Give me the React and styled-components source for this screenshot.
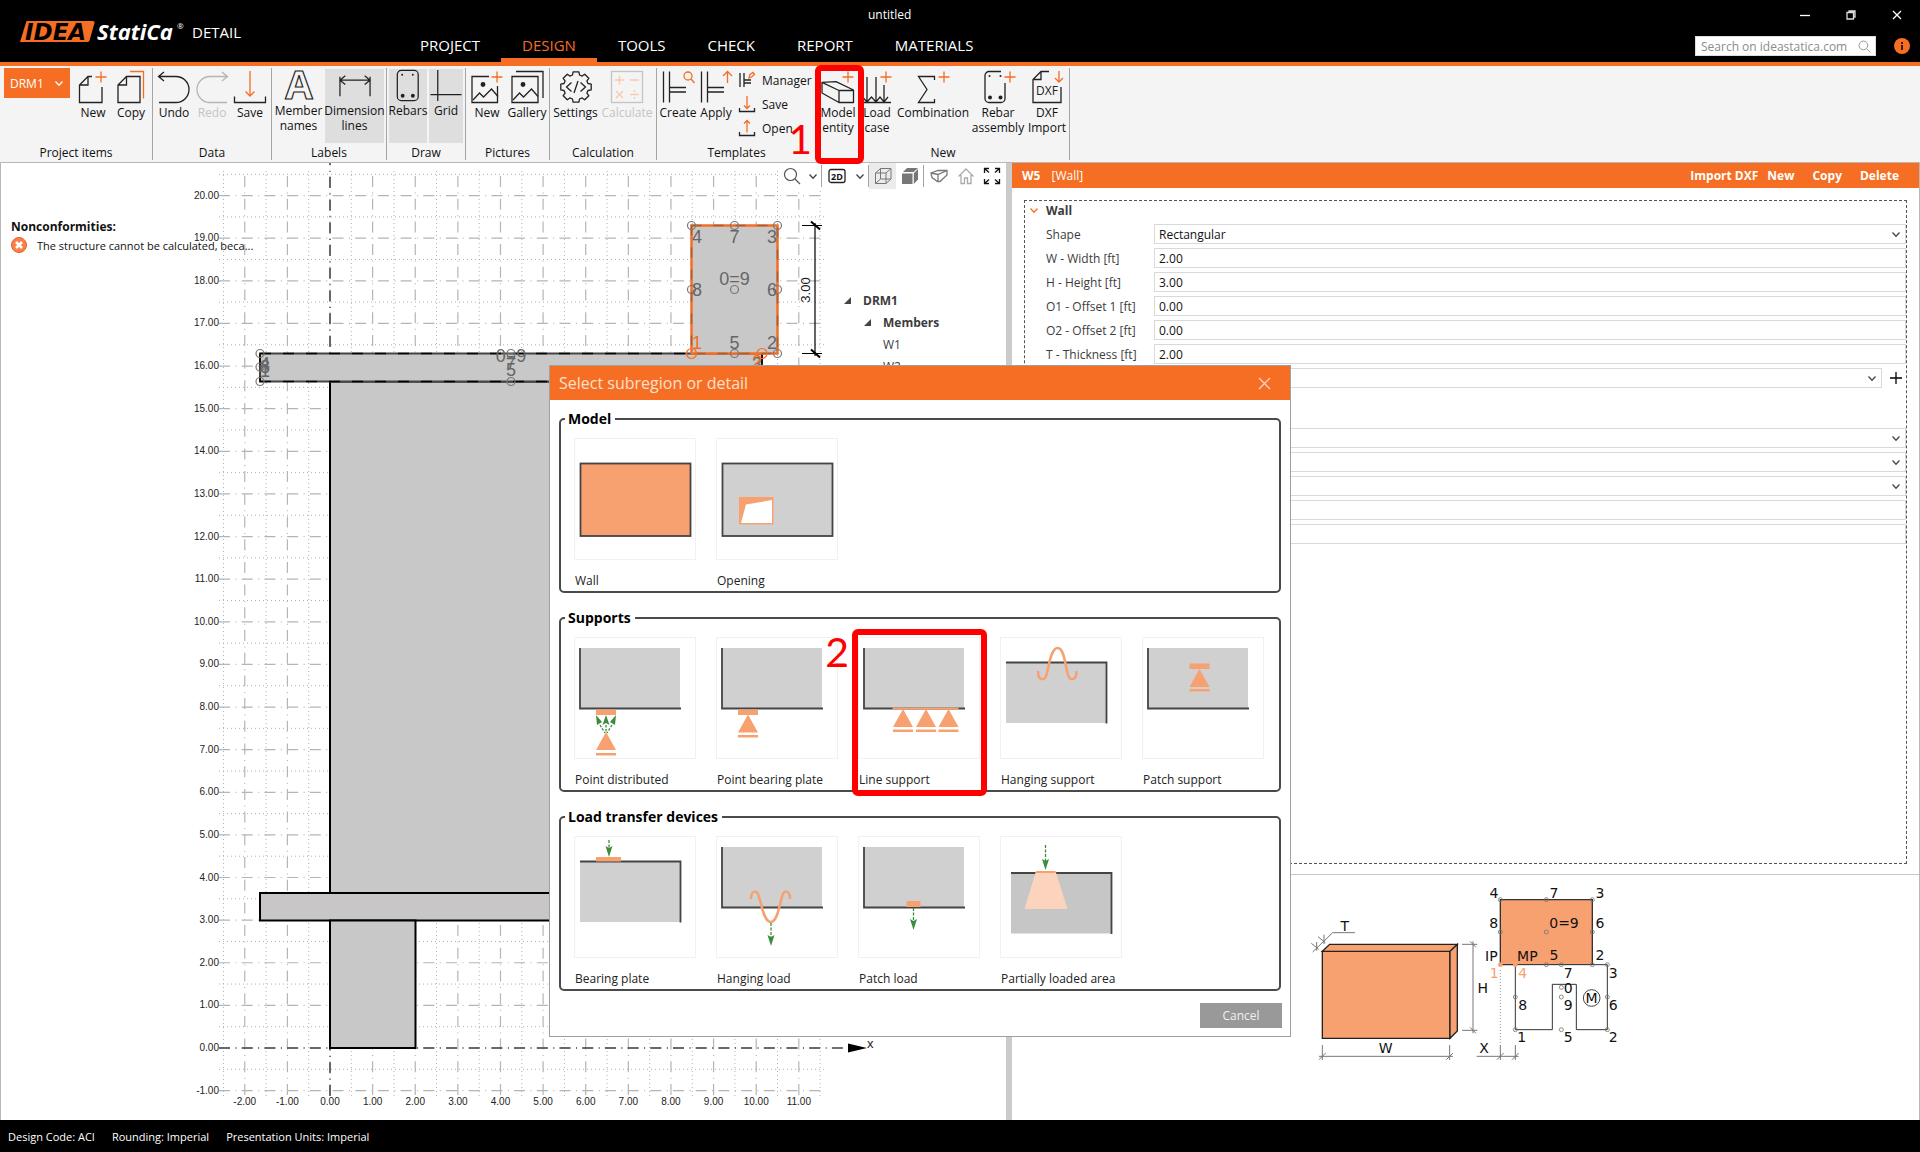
import React from 'react';
import styled, { createGlobalStyle, css } from 'styled-components';

const ORANGE = '#f56e23';
const PEACH = '#f7a171';

const GlobalStyle = createGlobalStyle`
  *, *::before, *::after { box-sizing: border-box; }
  body { margin: 0; background: #fff; }
  body, button, input, select {
    font-family: "Open Sans", "Noto Sans", sans-serif;
    font-size: 12px;
    line-height: 15px;
    color: #111;
  }
  button { border: 0; padding: 0; background: none; }
  svg { display: block; flex: none; overflow: visible; }
  h2, h3, p, ul { margin: 0; padding: 0; list-style: none; }
`;

/* ---------- shell ---------- */

const Page = styled.div`
  display: flex;
  flex-direction: column;
  min-height: 100vh;
  position: relative;
`;

const TitleBar = styled.header`
  display: grid;
  grid-template-columns: 399px 1fr auto;
  height: 66px;
  background: #000;
  border-bottom: 4px solid ${ORANGE};
  color: #fff;
`;

const Brand = styled.div`
  display: flex;
  align-items: center;
  gap: 6px;
  padding: 2px 0 0 18px;
  font-size: 15px;
`;

const TitleMiddle = styled.div`
  display: flex;
  flex-direction: column;
  justify-content: space-between;
`;

const FileName = styled.div`
  padding: 7px 0 0 469px;
`;

const Tabs = styled.nav`
  display: flex;
`;

const Tab = styled.a`
  padding: 0 21px;
  height: 28px;
  font-size: 15px;
  line-height: 22px;
  text-decoration: none;
  color: ${({ $active }) => ($active ? ORANGE : '#fff')};
  border-bottom: 4px solid ${({ $active }) => ($active ? ORANGE : 'transparent')};
`;

const TitleRight = styled.div`
  display: flex;
  flex-direction: column;
  align-items: flex-end;
  gap: 6px;
  padding-right: 10px;
`;

const WindowButtons = styled.div`
  display: flex;
  gap: 26px;
  height: 30px;
  align-items: center;
  padding-right: 3px;

  button { display: flex; justify-content: center; width: 20px; }
`;

const SearchRow = styled.div`
  display: flex;
  align-items: center;
  gap: 18px;
`;

const SearchBox = styled.form`
  display: flex;
  align-items: center;
  width: 181px;
  height: 20px;
  background: #fff;
  border: 1px solid #ddd;

  input {
    flex: 1;
    min-width: 0;
    border: 0;
    padding: 0 0 0 5px;
    background: none;
    outline: 0;
  }
  input::placeholder { color: #8c8c8c; opacity: 1; }
  button { padding-right: 4px; }
`;

/* ---------- ribbon ---------- */

const Ribbon = styled.div`
  display: flex;
  height: 97px;
  padding: 2px 0;
  background: #f4f4f4;
  border-bottom: 1px solid #b8b8b8;
`;

const Group = styled.section`
  display: flex;
  flex-direction: column;
  padding: 0 2px;
  border-right: 1px solid #a5a5a5;
`;

const GroupBody = styled.div`
  display: flex;
  align-items: flex-start;
  flex: 1;
  gap: ${({ $gap }) => $gap || 0}px;
`;

const GroupName = styled.h3`
  font-size: 12px;
  font-weight: 400;
  line-height: 15px;
  text-align: center;
`;

const Tool = styled.button`
  position: relative;
  display: flex;
  flex-direction: column;
  align-items: center;
  gap: 1px;
  width: ${({ $w }) => $w || 38}px;
  padding-top: 2px;
  white-space: nowrap;
  color: ${({ disabled }) => (disabled ? '#c4c4c4' : '#111')};

  ${({ $toggle }) =>
    $toggle &&
    css`
      height: 74px;
      margin-top: 1px;
      padding-top: 0;
      background: ${$toggle === 'on' ? '#dedede' : 'none'};
      svg { height: 33px; }
    `}
`;

const Lines = styled.span`
  display: flex;
  flex-direction: column;
  align-items: center;
`;

const ItemPicker = styled.button`
  display: flex;
  align-items: center;
  justify-content: space-between;
  width: 66px;
  height: 30px;
  margin: 0 4px 0 2px;
  padding: 0 6px;
  background: ${ORANGE};
  color: #fff;
`;

const SmallTools = styled.div`
  display: flex;
  flex-direction: column;
  width: 79px;
  padding: 0 0 0 3px;
`;

const SmallTool = styled.button`
  display: flex;
  align-items: center;
  gap: 6px;
  height: 24px;
`;

/* ---------- work area ---------- */

const Work = styled.main`
  display: flex;
  flex: 1;
  min-height: 0;
`;

const Scene = styled.section`
  position: relative;
  flex: 0 0 1006px;
  overflow: hidden;
  border-left: 1px solid #b8b8b8;
`;

const Splitter = styled.div`
  width: 6px;
  background: #cbcbcb;
`;

const Issues = styled.div`
  position: absolute;
  left: 10px;
  top: 56px;

  h2 { font-size: 12px; line-height: 16px; }
  p {
    display: flex;
    align-items: center;
    gap: 10px;
    height: 20px;
    font-size: 11px;
    white-space: nowrap;
  }
`;

const ViewBar = styled.div`
  position: absolute;
  right: 0;
  top: 0;
  display: flex;
  align-items: center;
  height: 26px;
  padding-right: 1px;
  background: #fff;
`;

const ViewButton = styled.button`
  display: flex;
  align-items: center;
  justify-content: center;
  width: ${({ $w }) => $w || 27}px;
  height: 26px;
  background: ${({ $on }) => ($on ? '#ebebeb' : 'none')};
`;

const Rule = styled.i`
  width: 1px;
  height: 22px;
  background: #a5a5a5;
`;

const Tree = styled.ul`
  position: absolute;
  left: 843px;
  top: 126px;
`;

const TreeItem = styled.li`
  display: flex;
  align-items: center;
  gap: 12px;
  height: 22px;
  padding-left: ${({ $level }) => $level * 20}px;
  font-weight: ${({ $leaf }) => ($leaf ? 400 : 700)};
  color: #3c3c3c;
  svg { visibility: ${({ $leaf }) => ($leaf ? 'hidden' : 'visible')}; }
`;

const Props = styled.aside`
  display: flex;
  flex-direction: column;
  flex: 1;
  min-width: 0;
  border-right: 1px solid #b8b8b8;
`;

const PropsHead = styled.div`
  display: flex;
  align-items: center;
  height: 25px;
  padding: 0 20px 0 10px;
  background: ${ORANGE};
  color: #fff;

  strong { margin-right: 11px; }
  button { color: #fff; font-weight: 700; margin-left: 18px; }
  button:first-of-type { margin-left: auto; }
  button:nth-of-type(2) { margin-left: 9px; }
`;

const PropsBox = styled.div`
  flex: 1;
  margin: 12px 12px 0;
  border: 1px dashed #555;
`;

const PropsTitle = styled.h2`
  display: flex;
  align-items: center;
  gap: 7px;
  height: 19px;
  padding-left: 4px;
  font-size: 12px;
  color: #3c3c3c;
`;

const Field = styled.div`
  display: grid;
  grid-template-columns: 108px 1fr auto;
  align-items: center;
  height: 20px;
  margin: 4px 0 4px 21px;
  color: #3c3c3c;

  & + & { margin-top: 0; }
`;

const Control = styled.div`
  position: relative;
  display: flex;
  height: 20px;
  border: 1px solid #d9d9d9;

  input, select {
    flex: 1;
    width: 100%;
    border: 0;
    padding: 0 4px;
    background: none;
    appearance: none;
    outline: 0;
  }
  svg { position: absolute; right: 4px; top: 5px; pointer-events: none; }
`;

const AddButton = styled.button`
  display: flex;
  justify-content: flex-end;
  width: 24px;
  padding-right: 4px;
`;

const MoreFields = styled.div`
  padding-top: 32px;
`;

const Legend = styled.div`
  display: flex;
  justify-content: center;
  align-items: flex-start;
  height: 246px;
  margin-top: 10px;
  border-top: 1px solid #c8c8c8;
`;

const StatusBar = styled.footer`
  display: flex;
  align-items: center;
  gap: 17px;
  height: 32px;
  padding-left: 8px;
  background: #000;
  color: #fff;
  font-size: 11px;
`;

/* ---------- dialog ---------- */

const Dialog = styled.div`
  position: absolute;
  left: 549px;
  top: 365px;
  width: 742px;
  background: #fff;
  border: 1px solid #a0a0a0;
`;

const DialogHead = styled.div`
  display: flex;
  align-items: center;
  justify-content: space-between;
  height: 34px;
  margin-bottom: 9px;
  padding: 0 19px 0 9px;
  background: ${ORANGE};
  color: #fbe0cf;
  font-size: 16px;
`;

const Box = styled.fieldset`
  display: flex;
  gap: 22px;
  height: 184px;
  margin: 0 9px 15px;
  padding: 10px 14px 0;
  border: 2px solid #4a4a4a;
  border-radius: 5px;

  legend {
    margin-left: -10px;
    padding: 0 4px 0 3px;
    font-size: 14px;
    font-weight: 700;
    line-height: 20px;
    color: #000;
  }
`;

const Card = styled.button`
  position: relative;
  display: flex;
  flex-direction: column;
  gap: 13px;
  width: 120px;
  height: 149px;
  font-size: 12px;
  line-height: 17px;
  white-space: nowrap;
  color: #222;
  text-align: left;

  > svg { outline: 1px solid #f1f1f1; }
`;

const DialogFoot = styled.div`
  display: flex;
  justify-content: flex-end;
  margin-top: -3px;
  padding: 0 8px 8px 0;
`;

const CancelButton = styled.button`
  width: 82px;
  height: 25px;
  background: #999;
  color: #f0f0f0;
  font-size: 12px;
`;

/* red call-out frames with their numbers */
const Callout = styled.span`
  position: absolute;
  left: ${({ $x }) => $x}px;
  top: ${({ $y }) => $y}px;
  width: ${({ $w }) => $w}px;
  height: ${({ $h }) => $h}px;
  border: 6px solid #fe0000;
  border-radius: 6px;
  z-index: 2;
  pointer-events: none;
`;

const CalloutNumber = styled.b`
  position: absolute;
  right: 100%;
  ${({ $low }) => ($low ? 'bottom: -1px;' : 'top: -4px;')}
  margin-right: 9px;
  font: 400 41px/41px Lato, sans-serif;
  color: #fe0000;
`;

/* ---------- icons ---------- */

const Svg = ({ w = 34, h = w, children, stroke = '#222', ...rest }) => (
  <svg width={w} height={h} viewBox={`0 0 ${w} ${h}`} fill="none" stroke={stroke} strokeWidth="1.3" aria-hidden="true" {...rest}>
    {children}
  </svg>
);

const Plus = ({ x, y = 7 }) => <path stroke={ORANGE} d={`M${x - 5.5} ${y}h11M${x} ${y - 5.5}v11`} />;

const Chevron = ({ color = '#444' }) => (
  <Svg w={10} h={9} stroke={color}>
    <path d="M1.5 2.5 5 6.2 8.500 2.5" />
  </Svg>
);

const NewIcon = () => (
  <Svg>
    <path d="M16 6.500h-4L3.500 15v17.500H26V17M12 6.500V15H3.500" />
    <Plus x={25} />
  </Svg>
);

const CopyIcon = () => (
  <Svg>
    <path d="M12.500 6.500H26v26H4V15zM12.500 6.500V15H4" />
    <path stroke={ORANGE} d="M16 1.500h13.500v27" />
  </Svg>
);

const UndoIcon = () => (
  <Svg>
    <path d="M1.500 6.500H19a13 13 0 0 1 0 26H2M7 2 1.500 6.500 7 11" />
  </Svg>
);

const RedoIcon = () => (
  <Svg stroke="#b5b5b5">
    <path d="M32.500 6.500H15a13 13 0 0 0 0 26h17M27 2l5.500 4.500L27 11" />
  </Svg>
);

const SaveIcon = () => (
  <Svg>
    <path d="M1.500 26.500v6h31v-6" />
    <path stroke={ORANGE} d="M17 1v25M12.500 21.500 17 26l4.500-4.500" />
  </Svg>
);

const NamesIcon = () => (
  <Svg>
    <text x="17" y="31" textAnchor="middle" fontFamily="Open Sans" fontWeight="700" fontSize="41" strokeWidth="1.2">A</text>
  </Svg>
);

const DimensionIcon = () => (
  <Svg>
    <path d="M1.500 8v20M32.500 8v20M1.500 11.500h31M7 7 1.500 11.500 7 16M27 7l5.500 4.500L27 16" />
  </Svg>
);

const RebarDots = () => (
  <g fill="#222" stroke="none">
    <circle cx="11" cy="6" r="1" />
    <circle cx="22" cy="6" r="1" />
    <circle cx="11.500" cy="27.500" r="2" />
    <circle cx="22" cy="27.500" r="2" />
  </g>
);

const RebarsIcon = () => (
  <Svg>
    <rect x="6" y="1.500" width="21.500" height="31" rx="4" />
    <RebarDots />
  </Svg>
);

const GridIcon = () => (
  <Svg>
    <path d="M8.500 1v32M1 26.500h32" />
  </Svg>
);

const Picture = () => (
  <>
    <circle cx="13" cy="14.500" r="1.800" fill="#222" />
    <path d="m3 30 6.500-7 4 4 8-8 6.500 7.500" />
  </>
);

const PictureNewIcon = () => (
  <Svg>
    <path d="M19 6.500H2v26h25.500V16" />
    <Picture />
    <Plus x={27} />
  </Svg>
);

const GalleryIcon = () => (
  <Svg>
    <path d="M2 6.500h26v26H2zM6 1.500h27V28" />
    <Picture />
  </Svg>
);

const gearPath = () => {
  const pts = [];
  for (let i = 0; i < 8; i++) {
    const a = (i * Math.PI) / 4 - Math.PI / 2;
    [[-0.28, 12.5], [-0.19, 15.5], [0.19, 15.5], [0.28, 12.5]].forEach(([d, r]) => {
      pts.push(`${(17 + r * Math.cos(a + d)).toFixed(1)} ${(17 + r * Math.sin(a + d)).toFixed(1)}`);
    });
  }
  return `M${pts.join('L')}Z`;
};

const SettingsIcon = () => (
  <Svg>
    <path strokeLinejoin="round" d={gearPath()} />
    <path d="m12.500 12.500-5 4.500 5 4.500M21.500 12.500l5 4.500-5 4.500M19 11l-4 12" />
  </Svg>
);

const CalculateIcon = () => (
  <Svg stroke="#c4c4c4">
    <rect x="1.500" y="1.500" width="31" height="31" />
    <path stroke="#f9c9ae" d="M5 10h9M9.500 5.500v9M20 10h9M6 21l7 7M13 21l-7 7M20 24.500h9M24.500 20v2M24.500 27v2" />
  </Svg>
);

const BeamLines = () => <path d="M2.500 1.500v31M8.500 1.500v31M8.500 17.500H25M8.500 22H25" />;

const CreateIcon = () => (
  <Svg>
    <BeamLines />
    <g stroke={ORANGE}>
      <circle cx="27" cy="6" r="4" />
      <path d="m30 9 3.500 4" />
    </g>
  </Svg>
);

const ApplyIcon = () => (
  <Svg>
    <BeamLines />
    <path stroke={ORANGE} d="M28.500 13V1.500M24 6l4.500-4.500L33 6" />
  </Svg>
);

const ManagerIcon = () => (
  <Svg w={18}>
    <path d="M2 2v14M6 2v14M6 9h7M6 12h7" />
    <path stroke={ORANGE} d="m11 7 1-3.500 3-2 1.500 2L13.500 6z" />
  </Svg>
);

const SmallSaveIcon = () => (
  <Svg w={18}>
    <path d="M1.500 13v3.500h15V13" />
    <path stroke={ORANGE} d="M9 1v12M6 10.500 9 13.500l3-3" />
  </Svg>
);

const SmallOpenIcon = () => (
  <Svg w={18}>
    <path d="M1.500 13v3.500h15V13" />
    <path stroke={ORANGE} d="M9 13.500V1.500M6 4.500l3-3 3 3" />
  </Svg>
);

const EntityIcon = () => (
  <Svg>
    <path strokeLinejoin="round" d="M1 12.300 15 11.700 32.500 20v12.500H18L1 23zM1 12.300 18 20.500h14M18 20.500v12" />
    <Plus x={27} />
  </Svg>
);

const LoadCaseIcon = () => (
  <Svg>
    <path d="M2 32.500h29M7 7v25M16 7v25M24 15v17M2.500 27 7 32l4.500-5 4.500 5 4-5 4 5 4-5" />
    <Plus x={26} />
  </Svg>
);

const CombinationIcon = () => (
  <Svg>
    <path d="M18.500 10V6.500H2.500L11 19.500l-8.500 13h16V29" />
    <Plus x={28} />
  </Svg>
);

const AssemblyIcon = () => (
  <Svg>
    <path d="M20 1.500H8a4 4 0 0 0-4 4v23a4 4 0 0 0 4 4h12a4 4 0 0 0 4-4V13" />
    <g transform="translate(-2.500 0)">
      <RebarDots />
    </g>
    <Plus x={29} />
  </Svg>
);

const DxfIcon = () => (
  <Svg>
    <path d="M19 1.500h-8L3 9.500v23h28V17M11 1.500v8H3" />
    <path stroke={ORANGE} d="M29 1v10.500M25 8l4 4 4-4" />
    <text x="17" y="25" textAnchor="middle" fontSize="12" fontFamily="Open Sans" fill="#222" stroke="none">DXF</text>
  </Svg>
);

const Magnifier = ({ size = 18, color = '#555' }) => (
  <svg width={size} height={size} viewBox="0 0 18 18" fill="none" stroke={color} strokeWidth="1.2" aria-hidden="true">
    <circle cx="7.500" cy="7.500" r="6" />
    <path d="m12 12 5 5" />
  </svg>
);

const CubeIcon = ({ solid }) => (
  <Svg w={18} stroke="#777">
    {solid ? (
      <path stroke="none" fill="#777" d="M1 6.500h10.500V17H1zM2 5l4-4h11l-4.500 4zM12.800 6.200 17 2v10.500L12.800 17z" />
    ) : (
      <path strokeWidth="1" d="M1.500 6h10.500v10.500H1.500zM1.500 6l5-4.500H17L12 6M17 1.500V12l-5 4.500M6.500 1.500V12H17M6.500 12l-5 4.500" />
    )}
  </Svg>
);

const Logo = () => (
  <svg width="168" height="28" viewBox="0 0 168 28" role="img" aria-label="IDEA StatiCa">
    <path fill={ORANGE} d="M8.500 3h66.500q2 0 1.500 2l-5 17.500q-.5 1.500-2.500 1.500H2z" />
    <text x="7" y="22" fontFamily="DejaVu Sans" fontWeight="700" fontStyle="italic" fontSize="23" fill="#000">IDEA</text>
    <text x="79" y="22" fontFamily="Open Sans" fontWeight="700" fontStyle="italic" fontSize="22" fill="#fff">StatiCa</text>
    <text x="159" y="11" fontFamily="Open Sans" fontSize="8" fill="#fff">®</text>
  </svg>
);

/* ---------- scene drawing ---------- */

const UNIT = 42.62;
const gx = (u) => 329 + u * UNIT;
const gy = (v) => 885 - v * UNIT;
const range = (from, to) => Array.from({ length: to - from + 1 }, (_, i) => from + i);

const Nodes = ({ points, color = '#777', r = 4 }) =>
  points.map(([x, y]) => <circle key={`${x}-${y}`} cx={x} cy={y} r={r} fill="none" stroke={color} strokeWidth="1.2" />);

const SceneDrawing = () => (
  <svg width="1005" height="956" viewBox="0 0 1005 956">
    <g stroke="#b0b0b0" strokeWidth="1" strokeDasharray="1 3">
      {range(-3, 11).map((i) => (
        <path key={`v${i}`} d={`M${gx(i + 0.5)} 8V934`} />
      ))}
      {range(-1, 20).map((i) => (
        <path key={`h${i}`} d={`M218 ${gy(i + 0.5)}H824`} />
      ))}
    </g>
    <g stroke="#b5b5b5" strokeWidth="1.2" strokeDasharray="11 5.500 1 5.200">
      {range(-2, 11).map((i) => (
        <path key={`v${i}`} strokeDashoffset="-5" d={`M${gx(i)} 8V934`} />
      ))}
      {range(-1, 20).map((i) => (
        <path key={`h${i}`} d={`M218 ${gy(i)}H824`} />
      ))}
    </g>
    <g stroke="#444" strokeWidth="1.500" strokeDasharray="11 5.500 1 5.200">
      <path strokeDashoffset="-14" d={`M${gx(0)} 0V934`} />
      <path d={`M218 ${gy(0)}H846`} />
    </g>
    <path d="M847 880.500v9l19-4.500z" />
    <g fontFamily="Liberation Sans" fontSize="10" fill="#222">
      {range(-1, 20).map((i) => (
        <text key={`ly${i}`} x="218" y={gy(i) + 3} textAnchor="end">{i.toFixed(2)}</text>
      ))}
      {range(-2, 11).map((i) => (
        <text key={`lx${i}`} x={gx(i)} y="942" textAnchor="middle">{i.toFixed(2)}</text>
      ))}
      <text x="866" y="885" fontSize="13">x</text>
    </g>

    <g fill="#c8c8c8" stroke="#000" strokeWidth="2">
      <rect x="329" y="218.500" width="363" height="512" />
      <rect x="259" y="730" width="502" height="27.500" fill="#c9c6c8" />
      <rect x="329" y="757.500" width="85.500" height="127.500" />
      <rect x="259" y="190.500" width="502" height="28" stroke="#444" />
    </g>
    <path d="M259 190.500H691M259 218.500H691M259 190.500v28M761 190.500v28" stroke="#000" strokeWidth="1.500" strokeDasharray="11 12" />
    <rect x="690.500" y="62.500" width="86" height="128" fill="#c8c8c8" stroke={ORANGE} strokeWidth="2.500" />
    <rect x="690.500" y="62.500" width="86" height="128" fill="none" stroke="#a0613c" strokeWidth="1.500" strokeDasharray="10 12" />
    <Nodes
      points={[
        [259, 190.5], [259, 204], [259, 218.5], [510, 190.5], [510, 218.5],
        [690.5, 62.5], [733.5, 62.5], [776.5, 62.5], [690.5, 126.5], [776.5, 126.5],
        [733.5, 126.5], [733.5, 190.5], [776.5, 190.5],
      ]}
    />
    <Nodes color={ORANGE} r={5} points={[[690.5, 190.5], [761, 190.5]]} />
    <g fontFamily="Liberation Sans" fontSize="18" fill="#666" textAnchor="middle">
      <text x="696" y="80">4</text>
      <text x="733.500" y="80">7</text>
      <text x="771" y="80">3</text>
      <text x="733.500" y="122">0=9</text>
      <text x="696" y="133">8</text>
      <text x="771" y="133">6</text>
      <text x="696" y="186" fill={ORANGE}>1</text>
      <text x="733.500" y="186">5</text>
      <text x="771" y="186">2</text>
      <text x="264" y="207">4</text>
      <text x="264" y="210">8</text>
      <text x="264" y="214">1</text>
      <text x="510" y="199">0=9</text>
      <text x="510" y="206">7</text>
      <text x="510" y="213">5</text>
      <text x="756" y="207">3</text>
      <text x="756" y="205" fill={ORANGE}>2</text>
    </g>
    <path d="M814 60v133M801 62.500h20M801 190.500h20" stroke="#000" strokeWidth="1.200" />
    <path d="m810 58.500 9 8M810 186.500l9 8" stroke="#000" strokeWidth="2" />
    <text x="809" y="127" textAnchor="middle" transform="rotate(-90 809 127)" fontFamily="Liberation Sans" fontSize="13" fill="#222">3.00</text>
  </svg>
);

/* legend drawing, three units to a pixel */
const LegendDrawing = () => (
  <svg width="340" height="195" viewBox="-12 45 1020 585">
    <g fill={PEACH} stroke="#222" strokeWidth="4">
      <path d="M67 274h383v261H67z" />
      <path d="m67 274 22-21h383l-22 21zM450 274l22-21v260l-22 22z" />
    </g>
    <g fill="none" stroke="#777" strokeWidth="3">
      <path d="m38 276 60-58h67M34 250l22 18M50 246v26M54 230l22 18M72 224v28" />
      <path d="M486 253h46M486 511h46M519 244v276M510 244l18 18M510 502l18 18" />
      <path d="M67 555v45M449 555v45M57 589h402M57 599l20-20M439 599l20-20" />
      <path d="M601 555v45M646 555v45M530 589h126M591 599l20-20M636 599l20-20" />
      <path d="M601 330v220" stroke="#999" strokeDasharray="3 6" />
    </g>
    <path d="M601 119h276v195H601z" fill={PEACH} stroke="#333" strokeWidth="4" />
    <path d="M646 314v195h111V373h72v136h93V314H646" fill="#fff" stroke="#333" strokeWidth="3" />
    <g fill="none" stroke="#777" strokeWidth="2.500">
      {[[601, 119], [739, 119], [877, 119], [601, 216], [739, 216], [877, 216], [739, 314], [784, 314], [877, 314], [922, 314], [784, 382], [784, 411], [646, 411], [922, 411], [646, 509], [784, 509], [922, 509]].map(
        ([x, y]) => <circle key={`${x}-${y}`} cx={x} cy={y} r="6" />
      )}
      <circle cx="875" cy="414" r="25" stroke="#222" />
    </g>
    <circle cx="601" cy="314" r="7" fill={PEACH} />
    <circle cx="646" cy="314" r="7" fill={PEACH} />
    <g fontFamily="DejaVu Sans" fontSize="42" fill="#111" textAnchor="middle">
      {[
        ['T', 134, 212], ['H', 548, 400], ['W', 257, 579], ['X', 552, 579],
        ['4', 582, 115], ['7', 762, 115], ['3', 900, 115],
        ['8', 581, 205], ['0=9', 792, 205], ['6', 900, 205],
        ['IP', 574, 303], ['MP', 682, 304], ['5', 762, 300], ['2', 900, 300],
        ['7', 805, 354], ['3', 940, 354], ['0', 805, 399],
        ['8', 668, 451], ['9', 805, 451], ['6', 940, 451],
        ['1', 665, 546], ['5', 805, 546], ['2', 940, 546], ['M', 875, 429],
      ].map(([t, x, y]) => (
        <text key={`${t}${x}${y}`} x={x} y={y}>{t}</text>
      ))}
      <g fill={PEACH}>
        <text x="583" y="354">1</text>
        <text x="668" y="354">4</text>
      </g>
    </g>
  </svg>
);

/* ---------- dialog thumbnails ---------- */

const Thumb = ({ children }) => (
  <svg width="120" height="120" viewBox="0 0 120 120" fill="none">{children}</svg>
);

// concrete block with two of its edges cut away
const Block = ({ x = 5, y = 10, corner = 'bottom', fill = '#d0d0d0' }) => (
  <>
    <rect x={x} y={y} width="100" height="60.500" fill={fill} />
    <path
      stroke="#444"
      strokeWidth="1.800"
      d={corner === 'bottom' ? `M${x} ${y}v60.500h101` : `M${x} ${y}h100.500v61`}
    />
  </>
);

const Support = ({ x, y, gap = 2.5 }) => (
  <path fill={PEACH} d={`M${x} ${y}l10 18h-20zM${x - 10} ${y + 18 + gap}h20v2.500h-20z`} />
);

const Arrow = ({ x, from, to }) => (
  <>
    <path stroke="#3c8c3c" strokeWidth="1.300" strokeDasharray="3 1.500" d={`M${x} ${from}V${to - 8}`} />
    <path fill="#3c8c3c" d={`M${x - 3.5} ${to - 11}l3.500 2 3.500-2-3.500 11z`} />
  </>
);

const thumbs = {
  Wall: <rect x="5.500" y="24.500" width="110" height="72.500" fill={PEACH} stroke="#444" strokeWidth="1.800" />,
  Opening: (
    <>
      <rect x="5.500" y="24.500" width="110" height="72.500" fill="#d0d0d0" stroke="#444" strokeWidth="1.800" />
      <path fill={PEACH} d="M22 58h34.500v27.500H22z" />
      <path fill="#fff" d="M29 65.500 55 61v23H24z" />
    </>
  ),
  'Point distributed': (
    <>
      <Block />
      <path fill={PEACH} d="M21 71.500h20V77H21z" />
      <path fill="#3c8c3c" d="m21 77 6 7-5 3zM41 77l-6 7 5 3zM31 77l3.500 10-3.500-2-3.500 2z" />
      <path stroke="#3c8c3c" strokeWidth="1.300" strokeDasharray="2.500 1.500" d="m25 87 5 8M31 87v8M37 87l-5 8" />
      <Support x={31} y={94} gap={3} />
    </>
  ),
  'Point bearing plate': (
    <>
      <Block />
      <path fill={PEACH} d="M21 71.500h20V77H21z" />
      <Support x={31} y={76.5} />
    </>
  ),
  'Line support': (
    <>
      <Block />
      <path stroke={PEACH} strokeWidth="2" d="M33.500 70.500h66" />
      <Support x={44} y={71} />
      <Support x={67} y={71} />
      <Support x={89.5} y={71} />
    </>
  ),
  'Hanging support': (
    <>
      <Block y={24.5} corner="top" />
      <path stroke={PEACH} strokeWidth="2.500" d="M37 33c0 10 7 11 9 2 2-8 4-25 10.700-25S64 27 66.500 35c2 9 9 8 9-2" />
    </>
  ),
  'Patch support': (
    <>
      <Block />
      <path fill={PEACH} d="M46.500 25.500h20V31h-20z" />
      <Support x={56.5} y={31} gap={2} />
    </>
  ),
  'Bearing plate': (
    <>
      <Block y={24.5} corner="top" />
      <path fill={PEACH} d="M21 20h25v4.500H21z" />
      <Arrow x={34} from={3} to={20} />
    </>
  ),
  'Hanging load': (
    <>
      <Block />
      <path stroke={PEACH} strokeWidth="2.500" d="M34 62c0-9 6-10 8-2 3 9 5 25 11.700 25S62 69 65 60c2-8 8-7 8 2" />
      <Arrow x={54} from={86} to={109} />
    </>
  ),
  'Patch load': (
    <>
      <Block />
      <path fill={PEACH} d="M47.500 64h14v6h-14z" />
      <Arrow x={54.5} from={71} to={93} />
    </>
  ),
  'Partially loaded area': (
    <>
      <Block x={10} y={36} corner="top" fill="#c6c6c6" />
      <path fill="#fcd3bd" d="M35 34h19.500l12 38H23.500z" />
      <path stroke={PEACH} strokeWidth="2" d="M35 35h19.500" />
      <Arrow x={44.5} from={8} to={33} />
    </>
  ),
};

const dialogGroups = [
  ['Model', ['Wall', 'Opening']],
  ['Supports', ['Point distributed', 'Point bearing plate', 'Line support', 'Hanging support', 'Patch support']],
  ['Load transfer devices', ['Bearing plate', 'Hanging load', 'Patch load', 'Partially loaded area']],
];

const ToolButton = ({ icon, label, children, ...rest }) => (
  <Tool type="button" {...rest}>
    {icon}
    <Lines>
      {label.split('|').map((line) => (
        <span key={line}>{line}</span>
      ))}
    </Lines>
    {children}
  </Tool>
);

const SelectSubregion = () => (
  <Dialog role="dialog" aria-labelledby="dialog-title">
    <DialogHead>
      <span id="dialog-title">Select subregion or detail</span>
      <button type="button" aria-label="Close">
        <Svg w={13} stroke="#fbd5c0">
          <path d="m1 1 11 11M12 1 1 12" />
        </Svg>
      </button>
    </DialogHead>
    {dialogGroups.map(([title, items]) => (
      <Box key={title}>
        <legend>{title}</legend>
        {items.map((item) => (
          <Card key={item} type="button">
            <Thumb>{thumbs[item]}</Thumb>
            {item}
            {item === 'Line support' && (
              <Callout $x={-7} $y={-9} $w={135} $h={167}>
                <CalloutNumber>2</CalloutNumber>
              </Callout>
            )}
          </Card>
        ))}
      </Box>
    ))}
    <DialogFoot>
      <CancelButton type="button">Cancel</CancelButton>
    </DialogFoot>
  </Dialog>
);

const wallFields = [
  ['width', 'W - Width [ft]', '2.00'],
  ['height', 'H - Height [ft]', '3.00'],
  ['offset1', 'O1 - Offset 1 [ft]', '0.00'],
  ['offset2', 'O2 - Offset 2 [ft]', '0.00'],
  ['thickness', 'T - Thickness [ft]', '2.00'],
];

const Properties = () => (
  <Props>
    <PropsHead>
      <strong>W5</strong>
      <span>[Wall]</span>
      <button type="button">Import DXF</button>
      <button type="button">New</button>
      <button type="button">Copy</button>
      <button type="button">Delete</button>
    </PropsHead>
    <PropsBox>
      <PropsTitle>
        <Chevron color={ORANGE} />
        Wall
      </PropsTitle>
      <Field>
        <label htmlFor="shape">Shape</label>
        <Control>
          <select id="shape">
            <option>Rectangular</option>
          </select>
          <Chevron />
        </Control>
      </Field>
      {wallFields.map(([id, label, value]) => (
        <Field key={id}>
          <label htmlFor={id}>{label}</label>
          <Control>
            <input id={id} defaultValue={value} />
          </Control>
        </Field>
      ))}
      <Field>
        <span />
        <Control>
          <select aria-label="Material" />
          <Chevron />
        </Control>
        <AddButton type="button" aria-label="Add material">
          <Svg w={12} stroke="#000">
            <path d="M6 0v12M0 6h12" />
          </Svg>
        </AddButton>
      </Field>
      <MoreFields>
        {['Master component', 'Master point', 'Insert point'].map((name) => (
          <Field key={name}>
            <span />
            <Control>
              <select aria-label={name} />
              <Chevron />
            </Control>
          </Field>
        ))}
        {['Position X', 'Rotation'].map((name) => (
          <Field key={name}>
            <span />
            <Control>
              <input aria-label={name} />
            </Control>
          </Field>
        ))}
      </MoreFields>
    </PropsBox>
    <Legend>
      <LegendDrawing />
    </Legend>
  </Props>
);

const TreeArrow = () => (
  <svg width="7" height="7" viewBox="0 0 7 7">
    <path d="M7 0v7H0z" fill="#444" />
  </svg>
);

const App = () => {
  return (
    <>
      <GlobalStyle />
      <Page>
        <TitleBar>
          <Brand>
            <Logo />
            DETAIL
          </Brand>
          <TitleMiddle>
            <FileName>untitled</FileName>
            <Tabs>
              {['PROJECT', 'DESIGN', 'TOOLS', 'CHECK', 'REPORT', 'MATERIALS'].map((tab) => (
                <Tab key={tab} href="#" $active={tab === 'DESIGN'}>{tab}</Tab>
              ))}
            </Tabs>
          </TitleMiddle>
          <TitleRight>
            <WindowButtons>
              <button type="button" aria-label="Minimize">
                <Svg w={10} stroke="#fff"><path d="M0 5.500h10" /></Svg>
              </button>
              <button type="button" aria-label="Restore">
                <Svg w={10} stroke="#ddd"><path d="M1 2.500h6.500V9H1zM3 2.500V1h6v6H7.500" /></Svg>
              </button>
              <button type="button" aria-label="Close window">
                <Svg w={10} stroke="#fff"><path d="m1 1 8 8M9 1 1 9" /></Svg>
              </button>
            </WindowButtons>
            <SearchRow>
              <SearchBox>
                <input aria-label="Search" placeholder="Search on ideastatica.com" />
                <button type="button" aria-label="Run search">
                  <Magnifier size={13} color="#888" />
                </button>
              </SearchBox>
              <button type="button" aria-label="Info">
                <Svg w={16} stroke="none">
                  <circle cx="8" cy="8" r="8" fill={ORANGE} />
                  <path fill="#3a1a08" d="M7 4h2v2H7zM7 7h2v5H7z" />
                </Svg>
              </button>
            </SearchRow>
          </TitleRight>
        </TitleBar>

        <Ribbon>
          <Group>
            <GroupBody>
              <ItemPicker type="button">
                DRM1
                <Chevron color="#fff" />
              </ItemPicker>
              <ToolButton icon={<NewIcon />} label="New" />
              <ToolButton icon={<CopyIcon />} label="Copy" />
            </GroupBody>
            <GroupName>Project items</GroupName>
          </Group>
          <Group>
            <GroupBody>
              <ToolButton icon={<UndoIcon />} label="Undo" />
              <ToolButton icon={<RedoIcon />} label="Redo" disabled />
              <ToolButton icon={<SaveIcon />} label="Save" />
            </GroupBody>
            <GroupName>Data</GroupName>
          </Group>
          <Group>
            <GroupBody $gap={2}>
              <ToolButton icon={<NamesIcon />} label="Member|names" $w={49} $toggle="off" />
              <ToolButton icon={<DimensionIcon />} label="Dimension|lines" $w={59} $toggle="on" />
            </GroupBody>
            <GroupName>Labels</GroupName>
          </Group>
          <Group>
            <GroupBody $gap={2}>
              <ToolButton icon={<RebarsIcon />} label="Rebars" $w={38} $toggle="on" />
              <ToolButton icon={<GridIcon />} label="Grid" $w={34} $toggle="on" />
            </GroupBody>
            <GroupName>Draw</GroupName>
          </Group>
          <Group>
            <GroupBody $gap={1}>
              <ToolButton icon={<PictureNewIcon />} label="New" />
              <ToolButton icon={<GalleryIcon />} label="Gallery" $w={40} />
            </GroupBody>
            <GroupName>Pictures</GroupName>
          </Group>
          <Group>
            <GroupBody $gap={1}>
              <ToolButton icon={<SettingsIcon />} label="Settings" $w={47} />
              <ToolButton icon={<CalculateIcon />} label="Calculate" $w={54} disabled />
            </GroupBody>
            <GroupName>Calculation</GroupName>
          </Group>
          <Group>
            <GroupBody>
              <ToolButton icon={<CreateIcon />} label="Create" />
              <ToolButton icon={<ApplyIcon />} label="Apply" />
              <SmallTools>
                <SmallTool type="button"><ManagerIcon />Manager</SmallTool>
                <SmallTool type="button"><SmallSaveIcon />Save</SmallTool>
                <SmallTool type="button"><SmallOpenIcon />Open</SmallTool>
              </SmallTools>
            </GroupBody>
            <GroupName>Templates</GroupName>
          </Group>
          <Group>
            <GroupBody>
              <ToolButton icon={<EntityIcon />} label="Model|entity" $w={38}>
                <Callout $x={-4} $y={-3} $w={49} $h={99}>
                  <CalloutNumber $low>1</CalloutNumber>
                </Callout>
              </ToolButton>
              <ToolButton icon={<LoadCaseIcon />} label="Load|case" $w={40} />
              <ToolButton icon={<CombinationIcon />} label="Combination" $w={72} />
              <ToolButton icon={<AssemblyIcon />} label="Rebar|assembly" $w={58} />
              <ToolButton icon={<DxfIcon />} label="DXF|Import" $w={40} />
            </GroupBody>
            <GroupName>New</GroupName>
          </Group>
        </Ribbon>

        <Work>
          <Scene>
            <SceneDrawing />
            <Issues>
              <h2>Nonconformities:</h2>
              <p>
                <Svg w={16} stroke="#fff">
                  <circle cx="8" cy="8" r="7.500" fill="#f9824a" stroke="#e0602a" strokeWidth="1" />
                  <path strokeWidth="2.500" d="m5 5 6 6M11 5l-6 6" />
                </Svg>
                The structure cannot be calculated, beca...
              </p>
            </Issues>
            <ViewBar>
              <ViewButton type="button" aria-label="Zoom"><Magnifier /></ViewButton>
              <ViewButton type="button" aria-label="Zoom options" $w={16}><Chevron /></ViewButton>
              <Rule />
              <ViewButton type="button" $w={30}>
                <Svg w={18} stroke="#222">
                  <rect x="1" y="2.500" width="16" height="13" rx="2" />
                  <text x="9" y="12.500" textAnchor="middle" fontSize="9" fontWeight="700" fontFamily="Open Sans" fill="#111" stroke="none">2D</text>
                </Svg>
              </ViewButton>
              <ViewButton type="button" aria-label="View options" $w={16}><Chevron /></ViewButton>
              <Rule />
              <ViewButton type="button" aria-label="Wireframe" $on><CubeIcon /></ViewButton>
              <ViewButton type="button" aria-label="Solid"><CubeIcon solid /></ViewButton>
              <Rule />
              <ViewButton type="button" aria-label="Perspective" $w={29}>
                <Svg w={18} stroke="#777"><path d="m1 6 7-2.500h9V8l-7 6.500H7.500L2 10.500zM1 6l7 1.500 9-4M8 7.500v6.500" /></Svg>
              </ViewButton>
              <ViewButton type="button" aria-label="Home" $w={26}>
                <Svg w={18} stroke="#aaa"><path d="M1.500 9.500 9 2l7.500 7.500M4 8v8.500h3.500V11h3v5.500H14V8" /></Svg>
              </ViewButton>
              <ViewButton type="button" aria-label="Fit to window" $w={26}>
                <Svg w={18} stroke="#111"><path d="M1.500 6V1.500H6M1.500 1.500l4.500 4M12 1.500h4.500V6M16.500 1.500l-4.500 4M1.500 12v4.500H6M1.500 16.500l4.500-4M16.500 12v4.500H12M16.500 16.500l-4.500-4" /></Svg>
              </ViewButton>
            </ViewBar>
            <Tree>
              <TreeItem $level={0}><TreeArrow />DRM1</TreeItem>
              <TreeItem $level={1}><TreeArrow />Members</TreeItem>
              <TreeItem $level={1} $leaf><TreeArrow />W1</TreeItem>
              <TreeItem $level={1} $leaf><TreeArrow />W2</TreeItem>
            </Tree>
          </Scene>
          <Splitter />
          <Properties />
        </Work>

        <StatusBar>
          <span>Design Code: ACI</span>
          <span>Rounding: Imperial</span>
          <span>Presentation Units: Imperial</span>
        </StatusBar>
        <SelectSubregion />
      </Page>
    </>
  );
};

export default App;
